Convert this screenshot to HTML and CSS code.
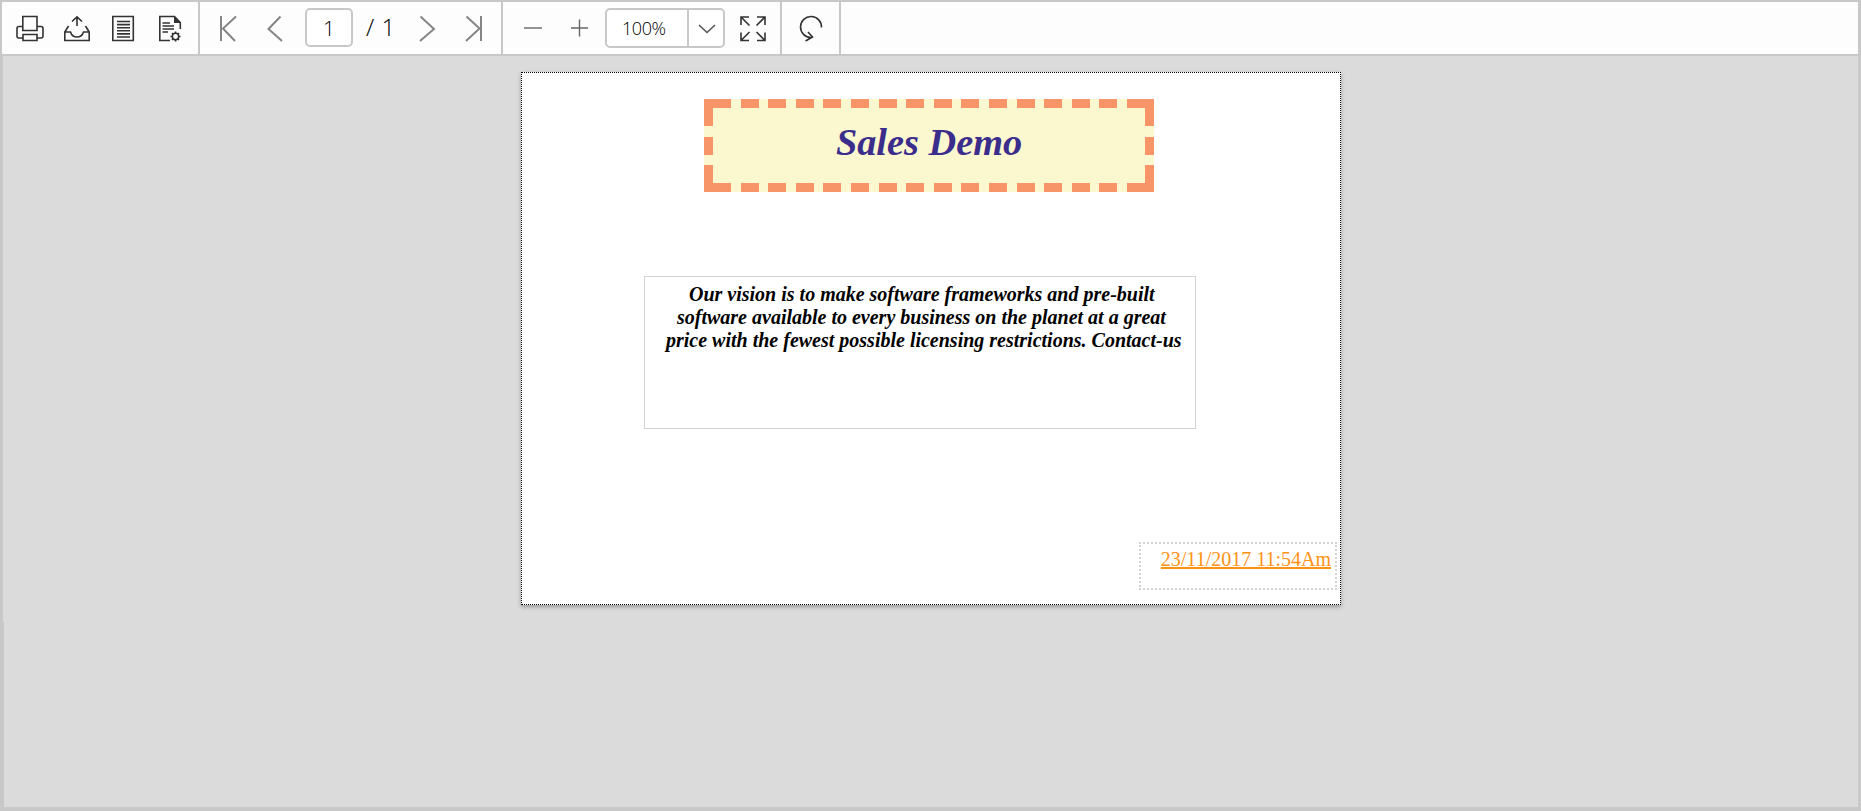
FILE: index.html
```
<!DOCTYPE html>
<html lang="en">
<head>
<meta charset="utf-8">
<title>Report Viewer</title>
<link rel="stylesheet" href="styles.css">
</head>
<body>
<div class="viewer">
  <div class="toolbar">
    <div class="group group-file">
      <svg class="icon" viewBox="0 0 28 28"><path d="M7 13.500H3Q1 13.500 1 15.500V23.500Q1 25 2.500 25H6.500M21.500 25H25Q27 25 27 23V15.500Q27 13.500 25 13.500H21.500M6.800 3.500H21V17.500H6.800ZM7 21.500H21V27.500H7Z"/></svg>
      <svg class="icon" viewBox="0 0 28 28"><path d="M14 13V4M9 8.500 14 3.800 19 8.500M5.500 13 1.800 19V27.500H26.200V19L22.500 13M1.800 19H7.500Q9 24 14 24T20.500 19H26.200"/></svg>
      <svg class="icon" viewBox="0 0 28 28"><path d="M3.800 3.500H24.300V27.500H3.800ZM8 8.500H21M8 11.600H21M8 14.700H21M8 17.800H21M8 20.900H21M8 24H21"/></svg>
      <svg class="icon" viewBox="0 0 28 28"><path d="M14 27.500H3.800V3.500H18.500L24.300 9.500V16M6.500 10H14M6.500 13H18M6.500 16H18M6.500 19H12"/><path class="solid" d="M18 3V10H25Z"/><circle cx="19.500" cy="23.500" r="3.200"/><path d="M19.500 18.500V20.300M19.500 26.700V28.500M14.500 23.500H16.300M22.700 23.500H24.500M16 20 17.200 21.200M21.800 25.800 23 27M16 27 17.200 25.800M21.800 21.200 23 20"/></svg>
    </div>
    <div class="group group-nav">
      <svg class="icon gray nav-first" viewBox="0 0 28 28"><path d="M7 3V28M22 3.500 9 15.500 21 28"/></svg>
      <svg class="icon gray nav-prev" viewBox="0 0 28 28"><path d="M20.500 3.500 8.500 16 22 28"/></svg>
      <div class="page-input">1</div>
      <div class="page-total">/ 1</div>
      <svg class="icon gray nav-next" viewBox="0 0 28 28"><path d="M7.500 3.500 21 16 7 28"/></svg>
      <svg class="icon gray nav-last" viewBox="0 0 28 28"><path d="M22 3V28M7.500 3.500 20.500 15.500 7 28"/></svg>
    </div>
    <div class="group group-zoom">
      <svg class="icon zoom-sign" viewBox="0 0 28 28"><path d="M5 15H23"/></svg>
      <svg class="icon zoom-sign" viewBox="0 0 28 28"><path d="M6 15H23M14.500 6.500V23.500"/></svg>
      <div class="zoom-box">
        <span class="zoom-value">100%</span>
        <span class="zoom-drop"><svg class="chevron" viewBox="0 0 18 10"><path d="M1 1 9 8.500 17 1"/></svg></span>
      </div>
      <svg class="icon full" viewBox="0 0 28 28"><path d="M2 12V4H10M2 4 10.500 12.500M18 4H26V12M26 4 17.500 12.500M2 19.500V27.500H10M2 27.500 10.500 19M26 19.500V27.500H18M26 27.500 17.500 19"/></svg>
    </div>
    <div class="group group-rotate">
      <svg class="icon" viewBox="0 0 28 28"><path d="M24.500 14.500A10.500 10.500 0 1 0 14 24.500M11 19 15.500 24 8.500 28"/></svg>
    </div>
  </div>
  <div class="canvas">
    <div class="rail"><div class="rail-low"></div></div>
    <div class="page">
      <div class="title">Sales Demo</div>
      <div class="vision">
        <div class="line line-1">Our vision is to make software frameworks and pre-built</div>
        <div class="line line-2">software available to every business on the planet at a great</div>
        <div class="line line-3">price with the fewest possible licensing restrictions. Contact-us</div>
      </div>
      <div class="date"><span class="date-text">23/11/2017 11:54Am</span></div>
    </div>
  </div>
</div>
</body>
</html>
```
FILE: styles.css
```
* { box-sizing: border-box; }
body { margin: 0; overflow: hidden; background: #dbdbdb; }
.viewer {
  width: 1861px;
  height: 811px;
  display: flex;
  flex-direction: column;
  border: solid #c8c8c8;
  border-width: 2px 3px 4px 0;
}
.toolbar {
  display: flex;
  height: 54px;
  flex: none;
  background: #fdfdfd;
  border-bottom: 2px solid #c8c8c8;
  border-left: 2px solid #c8c8c8;
  font-family: "Open Sans", sans-serif;
  font-weight: 300;
  color: #000;
}
.group {
  display: flex;
  align-items: flex-start;
  height: 52px;
  border-right: 2px solid #c8c8c8;
}
.icon {
  width: 28px;
  height: 28px;
  flex: none;
  margin-top: 11px;
  fill: none;
  stroke: #333;
  stroke-width: 1.6;
  overflow: visible;
}
.solid { fill: #333; stroke: none; }
.gray { stroke: #858585; stroke-width: 2; }
.zoom-sign { stroke: #666; stroke-width: 1.4; }
.group-file { width: 198px; padding-left: 14px; gap: 18.6px; }
.group-nav { width: 303px; padding-left: 14px; }
.nav-prev { margin-left: 18px; }
.page-input {
  width: 48px;
  height: 39px;
  margin: 6px 0 0 17px;
  border: 2px solid #c8c8c8;
  border-radius: 5px;
  background: #fff;
  font-size: 21px;
  line-height: 37px;
  text-align: center;
}
.page-total {
  width: 40px;
  margin: 5px 0 0 13px;
  font-size: 24px;
  line-height: 40px;
  letter-spacing: 0.5px;
  white-space: nowrap;
}
.nav-next { margin-left: 7px; }
.nav-last { margin-left: 18px; }
.group-zoom { width: 279px; padding-left: 16px; gap: 18px; }
.zoom-box {
  display: flex;
  width: 120px;
  flex: none;
  height: 40px;
  margin: 6px 0 0 -6px;
  border: 2px solid #c8c8c8;
  border-radius: 5px;
  background: #fff;
}
.zoom-value {
  width: 80px;
  padding-left: 15px;
  font-size: 18px;
  line-height: 37px;
  letter-spacing: -0.4px;
}
.zoom-drop {
  display: flex;
  flex: 1;
  padding: 14px 0 0 9px;
  border-left: 2px solid #c8c8c8;
}
.chevron { width: 18px; height: 10px; fill: none; stroke: #555; stroke-width: 1.6; }
.full { margin-left: -4px; }
.group-rotate { width: 59px; padding-left: 15px; }
.canvas { display: flex; flex: 1; background: #dbdbdb; }
.rail { width: 4px; height: 751px; padding-top: 566px; border-left: 3px solid #c8c8c8; }
.rail-low { width: 1px; height: 185px; background: #c8c8c8; }
.page {
  width: 820px;
  height: 533px;
  margin: 16px 0 0 517px;
  padding-top: 26px;
  background: #fff;
  border: 1px dotted #000;
  box-shadow: 0 2px 4px rgba(0, 0, 0, 0.3);
  font-family: "Liberation Serif", serif;
}
.title {
  --dash: #f79568;
  --side: linear-gradient(var(--dash) 27px, transparent 27px 37.5px, var(--dash) 37.5px 55.5px, transparent 55.5px 66px, var(--dash) 66px);
  --edge: repeating-linear-gradient(90deg, var(--dash) 0 18px, transparent 18px 27.6px);
  width: 450px;
  height: 93px;
  margin-left: 182px;
  padding-top: 9px;
  background:
    var(--side) 0 0 / 9px 93px no-repeat,
    var(--side) 441px 0 / 9px 93px no-repeat,
    var(--edge) 9px 0 / 432px 9px no-repeat,
    var(--edge) 9px 84px / 432px 9px no-repeat,
    #fbf7cf;
  color: #3b2d8c;
  font-size: 38.3px;
  font-style: italic;
  font-weight: bold;
  line-height: 68px;
  text-align: center;
}
.vision {
  width: 552px;
  height: 153px;
  margin: 84px 0 0 122px;
  padding: 6px 0 0 21px;
  border: 1px solid #d3d3d3;
  color: #000;
  font-size: 20px;
  font-style: italic;
  font-weight: bold;
  line-height: 23px;
  white-space: nowrap;
}
.line-1 { padding-left: 23px; }
.line-2 { padding-left: 11px; }
.date {
  width: 198px;
  height: 48px;
  margin: 113px 0 0 617px;
  padding: 4px 4px 0 0;
  border: 2px dotted #d3d3d3;
  text-align: right;
  font-size: 20px;
  line-height: 23px;
}
.date-text {
  color: #ff9214;
  text-decoration: underline;
  text-decoration-thickness: 2px;
  white-space: nowrap;
}
```
